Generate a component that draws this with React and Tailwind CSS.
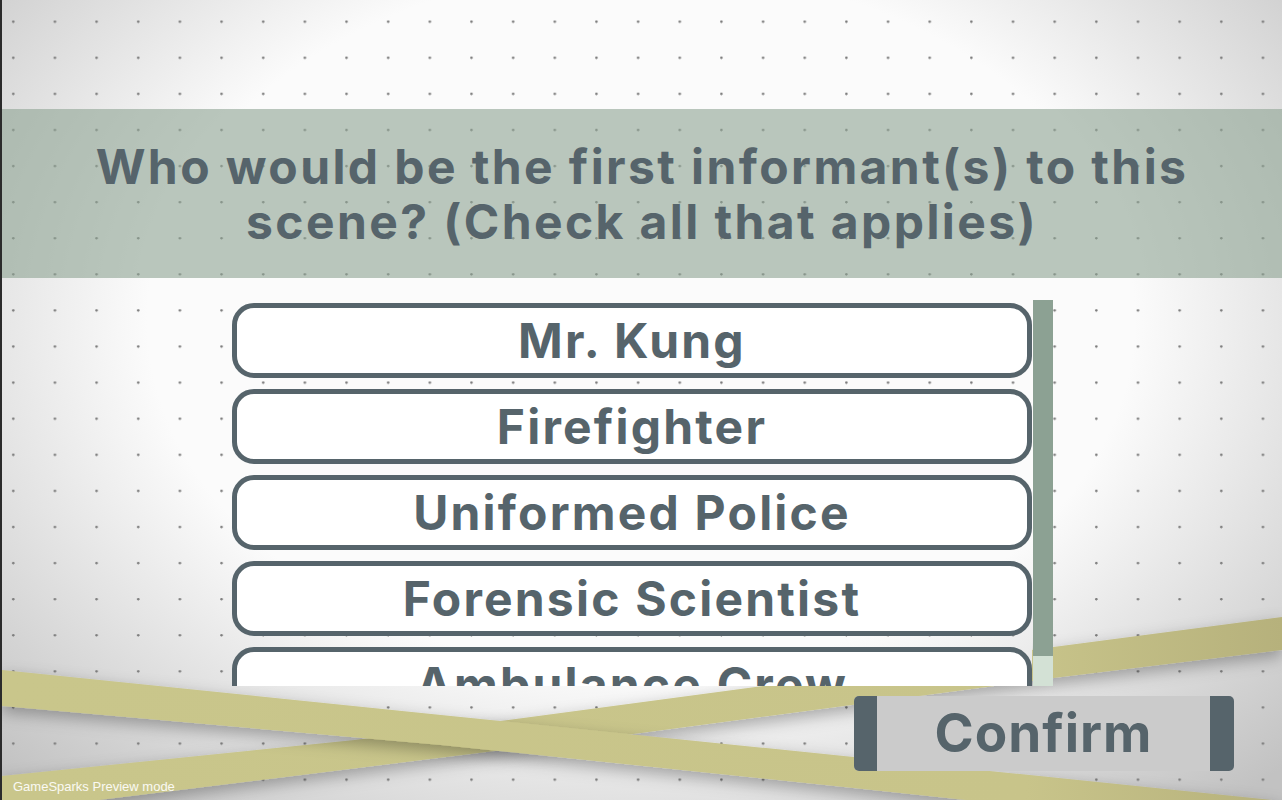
const pageBg =
  "bg-[radial-gradient(circle_at_13.3px_21.7px,#7c7c7c_0.9px,transparent_1.6px),radial-gradient(ellipse_70%_80%_at_50%_40%,#fbfbfb_55%,#c2c2c2_100%)] bg-size-[41.67px_36.1px,100%_100%] bg-fixed";

const options = ["Mr. Kung", "Firefighter", "Uniformed Police", "Forensic Scientist", "Ambulance Crew"];

const Tapes = () => (
  <svg className="absolute inset-0 w-full h-full" viewBox="0 0 1282 800" preserveAspectRatio="none">
    <defs>
      <linearGradient id="tape" x1="0" x2="1" y1="0" y2="0">
        <stop offset="0" stopColor="#c9c68b" />
        <stop offset="0.8" stopColor="#c8c48a" />
        <stop offset="1" stopColor="#b6b17c" />
      </linearGradient>
      <filter id="shade" x="-10%" y="-50%" width="120%" height="200%">
        <feDropShadow dx="0" dy="6" stdDeviation="8" floodColor="#000" floodOpacity="0.3" />
      </filter>
    </defs>
    <polygon
      points="0,776 353,740 507,720 1053,647 1282,617 1282,650 1053,678 640,733 0,812"
      fill="url(#tape)"
      filter="url(#shade)"
    />
    <polygon
      points="0,670 440,715 853,757 1282,801 1282,834 853,788 440,745 0,706"
      fill="url(#tape)"
      filter="url(#shade)"
    />
  </svg>
);

const OptionButton = ({ label }) => (
  <div className="h-[75px] shrink-0 border-[5px] border-[#56646b] rounded-[22px] bg-white flex items-center justify-center">
    <span className="text-[48px] font-bold tracking-[2.2px] text-[#56646b] leading-none">{label}</span>
  </div>
);

export default function App() {
  return (
    <div className="w-[1282px] h-[800px] flex overflow-hidden font-['Inter',sans-serif]">
      <div className="w-[2px] bg-[#2b2b2b]" />
      <div className={`relative flex-1 flex flex-col ${pageBg}`}>
        <Tapes />

        <div className="relative mt-[109px] h-[169px] bg-[#8ea393]/60 flex items-center justify-center">
          <h1 className="text-[48px] font-bold tracking-[2.4px] leading-[55px] text-[#56646b] text-center">
            Who would be the first informant(s) to this
            <br />
            scene? (Check all that applies)
          </h1>
        </div>

        <div className="relative mt-[22px] flex pl-[230px] gap-px">
          <div className={`w-[800px] h-[386px] overflow-hidden flex flex-col gap-[11px] pt-[3px] ${pageBg}`}>
            {options.map((o) => (
              <OptionButton key={o} label={o} />
            ))}
          </div>
          <div className="w-[20px] h-[386px] flex flex-col">
            <div className="h-[356px] bg-[#8ca193]" />
            <div className="flex-1 bg-[#d3e1d5]" />
          </div>
        </div>

        <div className="relative mt-[10px] self-end mr-[48px] w-[380px] h-[75px] rounded-[5px] bg-[#cbcbcb] flex overflow-hidden">
          <div className="w-[23px] bg-[#56646b]" />
          <div className="flex-1 flex items-center justify-center">
            <span className="text-[53px] font-bold tracking-[1px] text-[#56646b] leading-none">Confirm</span>
          </div>
          <div className="w-[24px] bg-[#56646b]" />
        </div>

        <span className="absolute left-[11px] bottom-[7px] text-[13px] leading-none text-white/90 font-['Liberation_Sans',sans-serif]">
          GameSparks Preview mode
        </span>
      </div>
    </div>
  );
}
